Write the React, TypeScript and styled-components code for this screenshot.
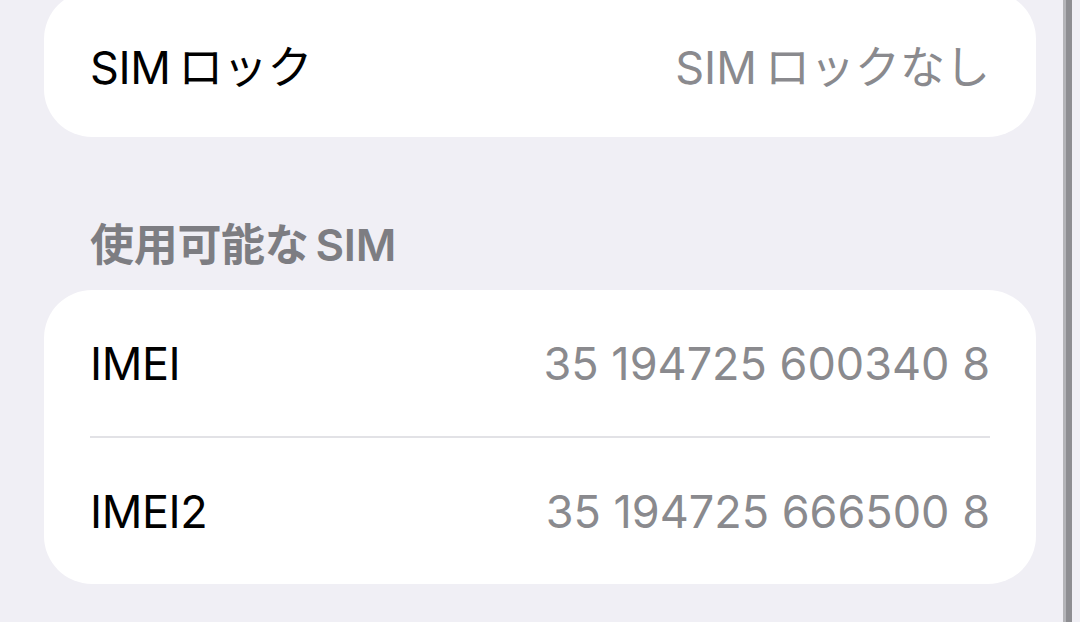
import React from 'react';
import styled, { createGlobalStyle } from 'styled-components';

const GlobalStyle = createGlobalStyle`
  html, body {
    margin: 0;
    padding: 0;
    background: #f0eff5;
  }
  body {
    font-family: Inter, "Noto Sans CJK JP", sans-serif;
    -webkit-font-smoothing: antialiased;
  }
`;

const Screen = styled.div`
  width: 1080px;
  height: 622px;
  overflow: hidden;
  display: flex;
  background: #f0eff5;
`;

const Content = styled.div`
  flex: 1;
  display: flex;
  flex-direction: column;
  padding: 0 27px 0 44px;
`;

const ScrollIndicator = styled.div`
  width: 9px;
  margin-right: 8px;
  background: #8e8e92;
  border-left: 3px solid #b4b4b8;
  box-sizing: border-box;
`;

const Group = styled.div<{ $offset?: number }>`
  background: #ffffff;
  border-radius: 48px;
  margin-top: ${(p) => p.$offset ?? 0}px;
  overflow: hidden;
`;

const Row = styled.div`
  height: 146px;
  display: flex;
  align-items: center;
  justify-content: space-between;
  padding: 0 46px;
  font-size: 45px;
  letter-spacing: -0.4px;
`;

const Label = styled.span`
  color: #000000;
`;

const Value = styled.span`
  color: #8a8a8e;
  letter-spacing: 0;
`;

const Divider = styled.div`
  height: 2px;
  margin: 0 46px;
  background: #e2e2e6;
`;

const SectionHeader = styled.div`
  padding: 80px 46px 17px;
  line-height: 56px;
  font-size: 44px;
  font-weight: 600;
  color: #7d7d82;
  letter-spacing: -0.3px;
`;

type Item = { label: string; value: string };

// thin space between latin and kana, as iOS renders it
const simLock: Item[] = [{ label: 'SIM\u2009ロック', value: 'SIM\u2009ロックなし' }];

const available: Item[] = [
  { label: 'IMEI', value: '35 194725 600340 8' },
  { label: 'IMEI2', value: '35 194725 666500 8' },
];

const renderRows = (items: Item[]) =>
  items.map((item, i) => (
    <React.Fragment key={item.label}>
      {i > 0 && <Divider />}
      <Row>
        <Label>{item.label}</Label>
        <Value>{item.value}</Value>
      </Row>
    </React.Fragment>
  ));

export default function App() {
  return (
    <Screen>
      <GlobalStyle />
      <Content>
        <Group $offset={-9}>{renderRows(simLock)}</Group>
        <SectionHeader>使用可能な{'\u2009'}SIM</SectionHeader>
        <Group>{renderRows(available)}</Group>
      </Content>
      <ScrollIndicator />
    </Screen>
  );
}
